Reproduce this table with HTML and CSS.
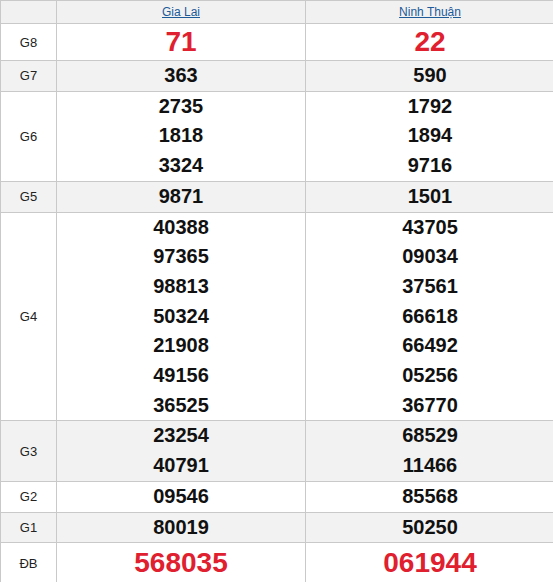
FILE: index.html
```
<!DOCTYPE html>
<html lang="vi">
<head>
<meta charset="utf-8">
<title>Kết quả xổ số</title>
<link rel="stylesheet" href="styles.css">
</head>
<body>
<table class="kq">
  <colgroup><col class="c-label"><col class="c-prov"><col class="c-prov"></colgroup>
  <thead>
    <tr class="head">
      <th></th>
      <th><a href="#">Gia Lai</a></th>
      <th><a href="#">Ninh Thuận</a></th>
    </tr>
  </thead>
  <tbody>
    <tr class="g8">
      <td class="lbl">G8</td>
      <td><div class="n red">71</div></td>
      <td><div class="n red">22</div></td>
    </tr>
    <tr class="alt">
      <td class="lbl">G7</td>
      <td><div class="n">363</div></td>
      <td><div class="n">590</div></td>
    </tr>
    <tr>
      <td class="lbl">G6</td>
      <td><div class="n">2735</div><div class="n">1818</div><div class="n">3324</div></td>
      <td><div class="n">1792</div><div class="n">1894</div><div class="n">9716</div></td>
    </tr>
    <tr class="alt">
      <td class="lbl">G5</td>
      <td><div class="n">9871</div></td>
      <td><div class="n">1501</div></td>
    </tr>
    <tr>
      <td class="lbl">G4</td>
      <td><div class="n">40388</div><div class="n">97365</div><div class="n">98813</div><div class="n">50324</div><div class="n">21908</div><div class="n">49156</div><div class="n">36525</div></td>
      <td><div class="n">43705</div><div class="n">09034</div><div class="n">37561</div><div class="n">66618</div><div class="n">66492</div><div class="n">05256</div><div class="n">36770</div></td>
    </tr>
    <tr class="alt">
      <td class="lbl">G3</td>
      <td><div class="n">23254</div><div class="n">40791</div></td>
      <td><div class="n">68529</div><div class="n">11466</div></td>
    </tr>
    <tr>
      <td class="lbl">G2</td>
      <td><div class="n">09546</div></td>
      <td><div class="n">85568</div></td>
    </tr>
    <tr class="alt">
      <td class="lbl">G1</td>
      <td><div class="n">80019</div></td>
      <td><div class="n">50250</div></td>
    </tr>
    <tr class="db">
      <td class="lbl">ĐB</td>
      <td><div class="n red">568035</div></td>
      <td><div class="n red">061944</div></td>
    </tr>
  </tbody>
</table>
</body>
</html>
```
FILE: styles.css
```
html, body {
  margin: 0;
  padding: 0;
  background: #fff;
  overflow: hidden;
}
body {
  font-family: "Liberation Sans", Arial, sans-serif;
}
.kq {
  border-collapse: collapse;
  table-layout: fixed;
  width: 555px;
}
.c-label { width: 56px; }
.c-prov { width: 249px; }
.kq th,
.kq td {
  border: 1px solid #c9c9c9;
  padding: 0;
  text-align: center;
  vertical-align: middle;
}
.head th {
  height: 22px;
  background: #f1f1f1;
  font-weight: normal;
  font-size: 12px;
}
.head a {
  color: #1c5a9a;
  text-decoration: underline;
}
.alt td {
  background: #f2f2f2;
}
.lbl {
  font-size: 13px;
  color: #222;
}
.n {
  font-size: 20px;
  font-weight: bold;
  color: #111;
  line-height: 29.7px;
}
.n.red {
  color: #e0202e;
  font-size: 28px;
}
.g8 .n {
  line-height: 36px;
}
.db .n {
  line-height: 40px;
}
```
